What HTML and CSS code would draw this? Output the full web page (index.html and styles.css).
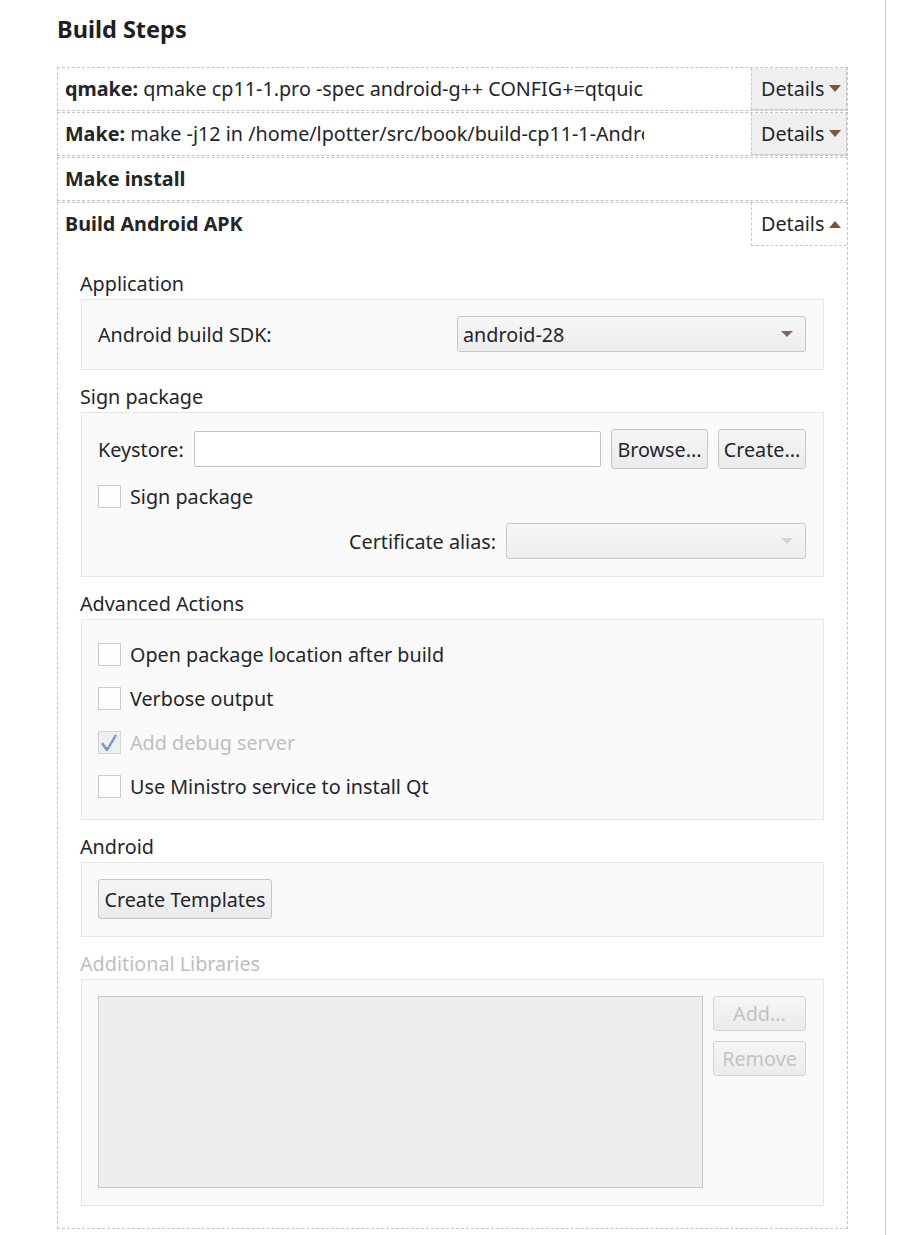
FILE: index.html
```html
<!DOCTYPE html>
<html>
<head>
<meta charset="utf-8">
<link rel="stylesheet" href="styles.css">
</head>
<body>
<div class="page">
  <h1 class="title">Build Steps</h1>
  <div class="steps">
    <div class="step">
      <div class="step-head">
        <div class="summary"><b>qmake:</b> qmake cp11-1.pro -spec android-g++ CONFIG+=qtquick_compiler</div>
        <div class="details">Details <span class="arrow down"></span></div>
      </div>
    </div>
    <div class="step">
      <div class="step-head">
        <div class="summary"><b>Make:</b> make -j12 in /home/lpotter/src/book/build-cp11-1-Android</div>
        <div class="details">Details <span class="arrow down"></span></div>
      </div>
    </div>
    <div class="step">
      <div class="step-head">
        <div class="summary"><b>Make install</b></div>
      </div>
    </div>
    <div class="step open">
      <div class="step-head">
        <div class="summary"><b>Build Android APK</b></div>
        <div class="details open">Details <span class="arrow up"></span></div>
      </div>
      <div class="step-body">
        <div class="section-title">Application</div>
        <div class="group">
          <div class="row between">
            <span>Android build SDK:</span>
            <div class="combo sdk"><span>android-28</span><span class="carrot"></span></div>
          </div>
        </div>

        <div class="section-title">Sign package</div>
        <div class="group sign">
          <div class="row keystore">
            <span>Keystore:</span>
            <div class="input"></div>
            <div class="btn browse">Browse...</div>
            <div class="btn create">Create...</div>
          </div>
          <div class="row check-row">
            <span class="checkbox"></span><span>Sign package</span>
          </div>
          <div class="row end">
            <span>Certificate alias:</span>
            <div class="combo alias disabled"><span></span><span class="carrot light"></span></div>
          </div>
        </div>

        <div class="section-title">Advanced Actions</div>
        <div class="group checks">
          <div class="check-row"><span class="checkbox"></span><span>Open package location after build</span></div>
          <div class="check-row"><span class="checkbox"></span><span>Verbose output</span></div>
          <div class="check-row disabled-text"><span class="checkbox checked"><svg width="21" height="21" viewBox="0 0 21 21"><polyline points="3,11 8,18 17,3" fill="none" stroke="#6f8fcb" stroke-width="2.4" stroke-linejoin="round"/><polyline points="3,11 8,18 17,3" fill="none" stroke="#d9c27a" stroke-width="1" stroke-dasharray="1 3"/></svg></span><span>Add debug server</span></div>
          <div class="check-row"><span class="checkbox"></span><span>Use Ministro service to install Qt</span></div>
        </div>

        <div class="section-title">Android</div>
        <div class="group">
          <div class="row">
            <div class="btn templates">Create Templates</div>
          </div>
        </div>

        <div class="section-title disabled-text">Additional Libraries</div>
        <div class="group libs">
          <div class="list"></div>
          <div class="lib-buttons">
            <div class="btn small disabled">Add...</div>
            <div class="btn small disabled">Remove</div>
          </div>
        </div>
      </div>
    </div>
  </div>
</div>
</body>
</html>
```

FILE: styles.css
```css
* { box-sizing: border-box; }
html, body {
  margin: 0;
  padding: 0;
  background: #ffffff;
}
body {
  font-family: "Noto Sans", "Open Sans", sans-serif;
  font-size: 19.75px;
  color: #232629;
}
.page {
  width: 886px;
  min-height: 1235px;
  border-right: 1px solid #c9c9c9;
  padding: 14px 37px 0 57px;
}
.title {
  margin: 0 0 23px 0;
  font-size: 23.5px;
  line-height: 30px;
  font-weight: 700;
  color: #1d1d23;
}
.steps {
  display: flex;
  flex-direction: column;
  gap: 1px;
}
.step {
  border: 1px dashed #c4c4c4;
}
.step-head {
  display: flex;
  align-items: stretch;
  height: 42px;
}
.summary {
  width: 586px;
  padding-left: 7px;
  white-space: nowrap;
  overflow: hidden;
  line-height: 42px;
}
.summary b { font-weight: 700; }
.details {
  margin-left: auto;
  width: 96px;
  background: #efefef;
  border-left: 1px dashed #c9c9c9;
  border-right: 1px solid #d2d2d2;
  border-bottom: 1px solid #cfcfcf;
  padding-left: 9px;
  display: flex;
  align-items: center;
  gap: 5px;
  line-height: 42px;
}
.details.open {
  background: #ffffff;
  border-right: none;
  border-bottom: 1px dashed #c9c9c9;
  height: 44px;
  margin-top: -1px;
  border-top: 1px dashed #c9c9c9;
}
.arrow {
  width: 0;
  height: 0;
  border-left: 6px solid transparent;
  border-right: 6px solid transparent;
}
.arrow.down { border-top: 7px solid #7b5638; }
.arrow.up { border-bottom: 7px solid #7b5638; }

.step-body {
  padding: 25px 23px 22px 23px;
}
.section-title {
  line-height: 28px;
  margin: 0 0 1px -1px;
}
.group + .section-title { margin-top: 13px; }
.group {
  background: #fafafa;
  border: 1px solid #e6e6e6;
  padding: 16px 17px 17px 16px;
}
.row {
  display: flex;
  align-items: center;
}
.row.between { justify-content: space-between; }
.row.end { justify-content: flex-end; gap: 10px; }
.combo {
  height: 36px;
  border: 1px solid #c6c6c6;
  border-radius: 3px;
  background: linear-gradient(#f7f7f7, #ededed);
  display: flex;
  align-items: center;
  justify-content: space-between;
  padding: 0 12px 0 5px;
}
.combo.sdk { width: 349px; }
.combo.alias { width: 300px; }
.carrot {
  width: 0;
  height: 0;
  border-left: 6px solid transparent;
  border-right: 6px solid transparent;
  border-top: 6px solid #7d6a5a;
}
.carrot.light { border-top-color: #d2d2d2; }

.sign .row + .row { margin-top: 13px; }
.keystore { height: 40px; gap: 10px; }
.input {
  flex: 1;
  height: 36px;
  background: #ffffff;
  border: 1px solid #c4c4c4;
  border-radius: 2px;
}
.btn {
  height: 40px;
  border: 1px solid #c6c6c6;
  border-radius: 3px;
  background: linear-gradient(#f6f6f6, #ebebeb);
  display: flex;
  align-items: center;
  justify-content: center;
  white-space: nowrap;
}
.btn.browse { width: 97px; }
.btn.create { width: 88px; }
.btn.templates { width: 174px; }

.check-row {
  display: flex;
  align-items: center;
  gap: 9px;
  height: 28px;
}
.checks {
  display: flex;
  flex-direction: column;
  gap: 12px;
  padding-top: 18px;
  padding-bottom: 17px;
}
.checks .check-row { height: 32px; }
.checkbox {
  width: 23px;
  height: 23px;
  border: 1px solid #cbcbcb;
  background: #fdfdfd;
  display: flex;
  align-items: center;
  justify-content: center;
}
.checkbox.checked {
  background: #efefef;
  border-color: #d4d4d4;
}
.disabled-text { color: #bcc0c0; }

.libs {
  display: flex;
  gap: 10px;
}
.list {
  width: 606px;
  height: 192px;
  background: #eeeeec;
  border: 1px solid #c3c7c5;
}
.lib-buttons {
  display: flex;
  flex-direction: column;
  gap: 10px;
}
.btn.small {
  width: 93px;
  height: 35px;
}
.btn.disabled {
  color: #c0c4c4;
  border-color: #d4d4d4;
}
```
